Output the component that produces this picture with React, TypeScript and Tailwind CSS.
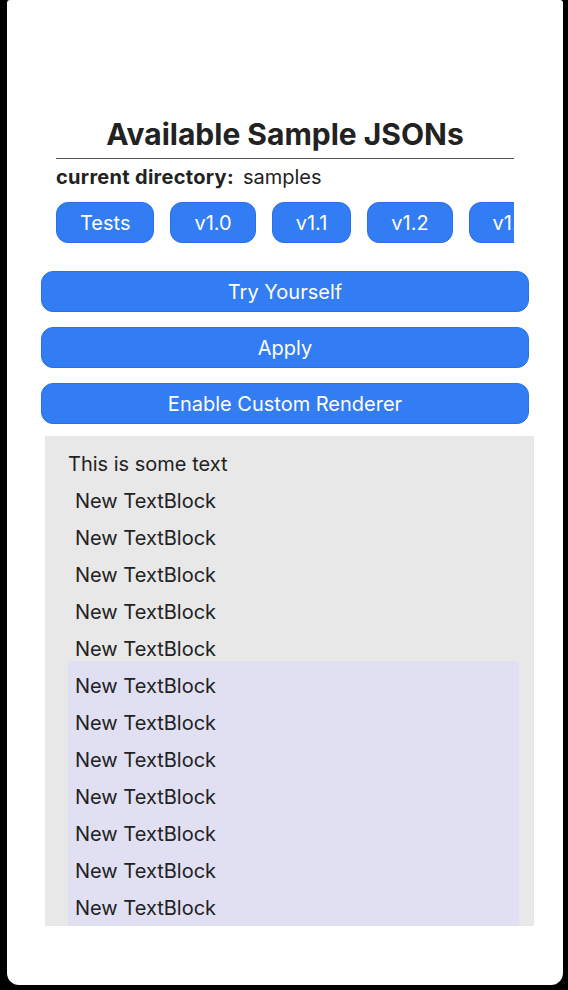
import React from "react";

const versions = ["Tests", "v1.0", "v1.1", "v1.2", "v1.3"];

export default function App() {
  const outer = Array.from({ length: 5 });
  const inner = Array.from({ length: 8 });

  return (
    <div className="h-[990px] w-[568px] overflow-hidden bg-black pl-[7px] pr-[5px] pb-[5px]" style={{ fontFamily: "Inter, 'Noto Sans', sans-serif" }}>
      <div className="flex h-full flex-col rounded-b-[12px] rounded-t-[3px] bg-white text-[#222]">
        <div className="mx-[49px] mt-[117px]">
          <h1 className="text-center text-[30px] font-bold leading-[35px] text-[#222]">Available Sample JSONs</h1>
          <div className="mt-[6px] h-px bg-[#555]" />
          <div className="mt-[6px] flex items-center gap-[9px] text-[20px] leading-[24px]">
            <span className="font-bold tracking-[0.3px]">current directory:</span>
            <span>samples</span>
          </div>
          <div className="mt-[13px] flex gap-[16px] overflow-hidden">
            {versions.map((v) => (
              <button
                key={v}
                className="h-[41px] shrink-0 rounded-[12px] border border-[#2a6fe6] bg-[#327cf4] px-[23px] text-[20px] text-white"
              >
                {v}
              </button>
            ))}
          </div>
        </div>

        <div className="mx-[34px] mt-[28px] flex flex-col gap-[15px]">
          {["Try Yourself", "Apply", "Enable Custom Renderer"].map((t) => (
            <button
              key={t}
              className="h-[41px] w-full rounded-[12px] border border-[#2a6fe6] bg-[#327cf4] text-[20px] text-white"
            >
              {t}
            </button>
          ))}
        </div>

        <div className="ml-[38px] mr-[29px] mt-[12px] h-[490px] overflow-hidden bg-[#e8e8e8] pl-[23px] pr-[15px] pt-[3px] text-[20px] leading-[24px] text-[#222]">
          <div className="pt-[13px]">This is some text</div>
          {outer.map((_, i) => (
            <div key={i} className="pl-[7px] pt-[13px]">New TextBlock</div>
          ))}
          <div className="rounded-t-[4px] bg-[#e1e0f3]">
            {inner.map((_, i) => (
              <div key={i} className="pl-[7px] pt-[13px]">New TextBlock</div>
            ))}
          </div>
        </div>
      </div>
    </div>
  );
}
